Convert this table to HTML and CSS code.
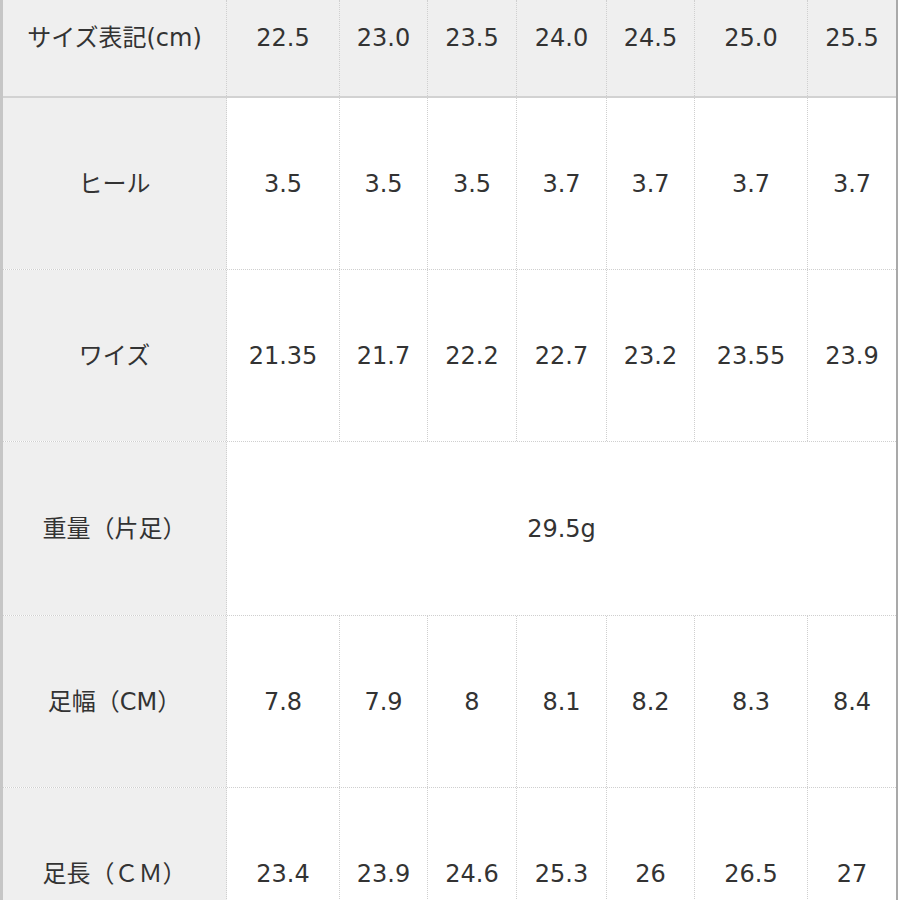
FILE: index.html
```html
<!DOCTYPE html>
<html lang="ja">
<head>
<meta charset="utf-8">
<title>サイズ表</title>
<link rel="stylesheet" href="styles.css">
</head>
<body>
<div class="sheet" role="table">
  <div class="row head" role="row">
    <div class="cell label" role="rowheader">サイズ表記(cm)</div>
    <div class="cell">22.5</div>
    <div class="cell">23.0</div>
    <div class="cell">23.5</div>
    <div class="cell">24.0</div>
    <div class="cell">24.5</div>
    <div class="cell">25.0</div>
    <div class="cell last">25.5</div>
  </div>
  <div class="row" role="row">
    <div class="cell label" role="rowheader">ヒール</div>
    <div class="cell">3.5</div>
    <div class="cell">3.5</div>
    <div class="cell">3.5</div>
    <div class="cell">3.7</div>
    <div class="cell">3.7</div>
    <div class="cell">3.7</div>
    <div class="cell last">3.7</div>
  </div>
  <div class="row" role="row">
    <div class="cell label" role="rowheader">ワイズ</div>
    <div class="cell">21.35</div>
    <div class="cell">21.7</div>
    <div class="cell">22.2</div>
    <div class="cell">22.7</div>
    <div class="cell">23.2</div>
    <div class="cell">23.55</div>
    <div class="cell last">23.9</div>
  </div>
  <div class="row tall" role="row">
    <div class="cell label" role="rowheader">重量（片足）</div>
    <div class="cell span last">29.5g</div>
  </div>
  <div class="row" role="row">
    <div class="cell label" role="rowheader">足幅（CM）</div>
    <div class="cell">7.8</div>
    <div class="cell">7.9</div>
    <div class="cell">8</div>
    <div class="cell">8.1</div>
    <div class="cell">8.2</div>
    <div class="cell">8.3</div>
    <div class="cell last">8.4</div>
  </div>
  <div class="row" role="row">
    <div class="cell label" role="rowheader">足長（ＣＭ）</div>
    <div class="cell">23.4</div>
    <div class="cell">23.9</div>
    <div class="cell">24.6</div>
    <div class="cell">25.3</div>
    <div class="cell">26</div>
    <div class="cell">26.5</div>
    <div class="cell last">27</div>
  </div>
</div>
</body>
</html>
```
FILE: styles.css
```css
html, body {
  margin: 0;
  padding: 0;
  background: #ffffff;
}

body {
  font-family: "DejaVu Sans", "Noto Sans CJK JP", sans-serif;
  font-size: 24px;
  color: #333333;
  overflow: hidden;
}

.sheet {
  width: 896px;
  border-left: 3px solid #c6c6c6;
  border-right: 2px solid #a9a9a9;
  box-sizing: content-box;
  width: 893px;
}

.row {
  display: grid;
  grid-template-columns: 224px 113px 88px 89px 90px 88px 113px 88px;
  height: 172px;
  border-bottom: 1px dotted #cfcfcf;
  box-sizing: border-box;
}

.row.tall {
  height: 174px;
}

.row.head {
  height: 98px;
  background: #efefef;
  border-bottom: 2px solid #d2d2d2;
}

.cell {
  display: flex;
  align-items: center;
  justify-content: center;
  border-right: 1px dotted #cfcfcf;
  line-height: 30px;
  white-space: nowrap;
  background: #ffffff;
}

.head .cell {
  align-items: flex-start;
  padding-top: 23px;
  background: #efefef;
}

.cell.label {
  background: #efefef;
}

.cell.last {
  border-right: none;
}

.cell.span {
  grid-column: 2 / -1;
}
```
